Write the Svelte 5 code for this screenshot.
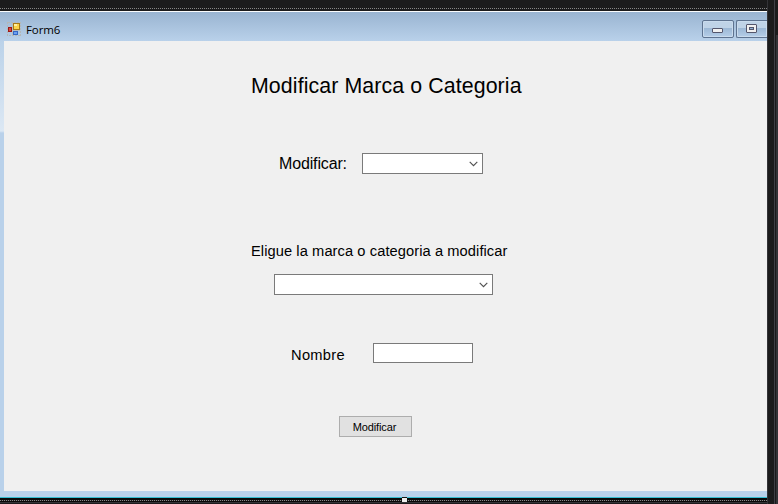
<script>
  let category = $state('');
  let item = $state('');
  let name = $state('');
</script>

{#snippet combo(value, cls)}
  <div class="combo {cls}" role="combobox" aria-expanded="false" aria-controls="none" tabindex="-1">
    <span>{value}</span>
    <svg width="9" height="6" viewBox="0 0 9 6"><path d="M.7 .8 4.5 4.6 8.3 .8" fill="none" stroke="#505050" stroke-width="1.15" /></svg>
  </div>
{/snippet}

<div class="screen">
  <div class="designer">
    <div class="top-strip"><div class="dots"></div></div>
    <section class="window">
      <header>
        <svg class="app-icon" width="14" height="14" viewBox="0 0 14 14" shape-rendering="crispEdges">
          <path d="M.5 .5h13v13H.5z" fill="none" stroke="#b4b8b9" stroke-dasharray="2 1" />
          <path d="M5.5 1v12M1 8.5h12" stroke="#b9bdbd" />
          <rect x="6" y="1" width="7" height="7" fill="#a87913" />
          <rect x="7" y="2" width="5" height="5" fill="#fbd44b" />
          <rect x="7" y="2" width="3" height="2" fill="#fff0a0" />
          <rect x="1" y="5" width="4" height="5" fill="#9c1715" />
          <rect x="2" y="6" width="2" height="3" fill="#d84b3e" />
          <rect x="6" y="9" width="5" height="4" fill="#3468c5" />
          <rect x="7" y="10" width="3" height="2" fill="#6b9ff2" />
        </svg>
        <span class="caption">Form6</span>
        <div class="controls">
          <div class="control">
            <svg width="11" height="5" viewBox="0 0 11 5"><rect x=".5" y=".5" width="10" height="4" rx=".5" fill="#f0f0f0" stroke="#54566c" /></svg>
          </div>
          <div class="control clipped">
            <svg width="11" height="9" viewBox="0 0 11 9"><rect x=".5" y=".5" width="10" height="8" rx=".5" fill="#f0f0f0" stroke="#54566c" /><rect x="3.5" y="3.5" width="4" height="2" fill="#8eb0d2" stroke="#54566c" /></svg>
          </div>
        </div>
      </header>
      <div class="content">
        <div class="edge"></div>
        <main>
          <h1>Modificar Marca o Categoria</h1>
          <div class="row kind"><span>Modificar:</span>{@render combo(category, 'small')}</div>
          <p>Eligue la marca o categoria a modificar</p>
          {@render combo(item, 'large')}
          <div class="row name"><label for="nombre">Nombre</label><input id="nombre" bind:value={name} /></div>
          <button>Modificar</button>
        </main>
      </div>
      <div class="base"></div>
    </section>
    <div class="bottom-strip">
      <div class="dots"></div>
      <div class="grip"></div>
    </div>
  </div>
  <aside><div></div></aside>
</div>

<style>
  .screen { width: 778px; height: 504px; display: flex; overflow: hidden; background: #1b1b1c; font-family: "Liberation Sans", Arial, sans-serif; color: #000; }
  .screen, .screen * { box-sizing: border-box; }
  .designer { width: 767px; display: flex; flex-direction: column; }
  .top-strip { height: 11px; padding-top: 8px; background: #1b1b1c; }
  .dots { height: 1px; background: repeating-linear-gradient(90deg, #858585 0 1px, #1b1b1c 1px 2px); }
  .window { height: 487px; display: flex; flex-direction: column; border-top: 1px solid #fafcfd; border-bottom: 1px solid #35bdd0; }
  header { height: 29px; display: flex; background: linear-gradient(#99b4d1, #b9d1ea); padding-left: 7px; }
  .app-icon { margin-top: 10px; flex: none; }
  .caption { margin-left: 5px; padding-top: 9px; line-height: 17px; font-family: "Open Sans", "Noto Sans", sans-serif; font-size: 11.5px; letter-spacing: -.1px; }
  .controls { margin-left: auto; display: flex; gap: 2px; padding-top: 8px; }
  .control { width: 32px; height: 18px; display: flex; align-items: center; justify-content: center; border: 1px solid #5e7390; border-radius: 2px; background: linear-gradient(#bfd3e7 0 45%, #9cb8d5 45%, #b5cee8); box-shadow: inset 0 0 0 1px #c9dbed; }
  .control:first-child svg { margin: 3px 2px 0 0; }
  .clipped { width: 31px; border-right: 0; border-radius: 2px 0 0 2px; }
  .clipped svg { margin-right: 1px; margin-bottom: 1px; }
  .content { display: flex; height: 450px; }
  .edge { width: 4px; background: linear-gradient(#bbd2e9 0, #dce8f4 90px, #b9d1ea 92px); }
  main { flex: 1; background: #f0f0f0; display: flex; flex-direction: column; align-items: flex-start; }
  h1 { margin: 32px 0 0 247px; font-size: 21.33px; font-weight: 400; line-height: 26px; letter-spacing: .1px; white-space: nowrap; }
  .row { display: flex; align-items: center; }
  .kind { margin: 54px 0 0 275px; height: 21px; font-size: 16px; }
  .kind span { width: 83px; letter-spacing: -.15px; }
  .combo { height: 21px; display: flex; align-items: center; justify-content: space-between; padding: 0 4px; background: #fff; border: 1px solid #7a7a7a; }
  .small { width: 121px; }
  .large { width: 219px; margin: 13px 0 0 270px; }
  p { margin: 68px 0 0 247px; font-size: 14.67px; line-height: 19px; letter-spacing: .08px; white-space: nowrap; }
  .name { margin: 48px 0 0 287px; height: 20px; font-size: 14.67px; }
  .name label { width: 82px; padding-top: 4px; letter-spacing: .3px; }
  input { width: 100px; height: 20px; border: 1px solid #7a7a7a; background: #fff; padding: 1px; outline: 0; border-radius: 0; }
  button { width: 73px; height: 21px; margin: 53px 0 0 335px; padding: 1px 2px 0 0; border: 1px solid #adadad; background: #e1e1e1; font-family: inherit; font-size: 11px; line-height: 18px; letter-spacing: -.1px; color: #000; border-radius: 0; }
  .base { height: 6px; background: #b9d1ea; }
  .bottom-strip { height: 6px; padding-top: 2px; background: linear-gradient(#080808 0 4px, #333337 4px 5px, #1b1b1c 5px); position: relative; }
  .grip { position: absolute; left: 402px; top: -1px; width: 5px; height: 5px; background: #eee; border-top: 1px solid #161616; }
  aside { width: 11px; background: #1b1b1c; border-left: 1px solid #333337; padding-left: 6px; }
  aside div { height: 100%; border-left: 1px solid #3f3f46; background: linear-gradient(#333337, #333337) 1px 35px / 2px 100% no-repeat #1b1b1c; }
</style>
